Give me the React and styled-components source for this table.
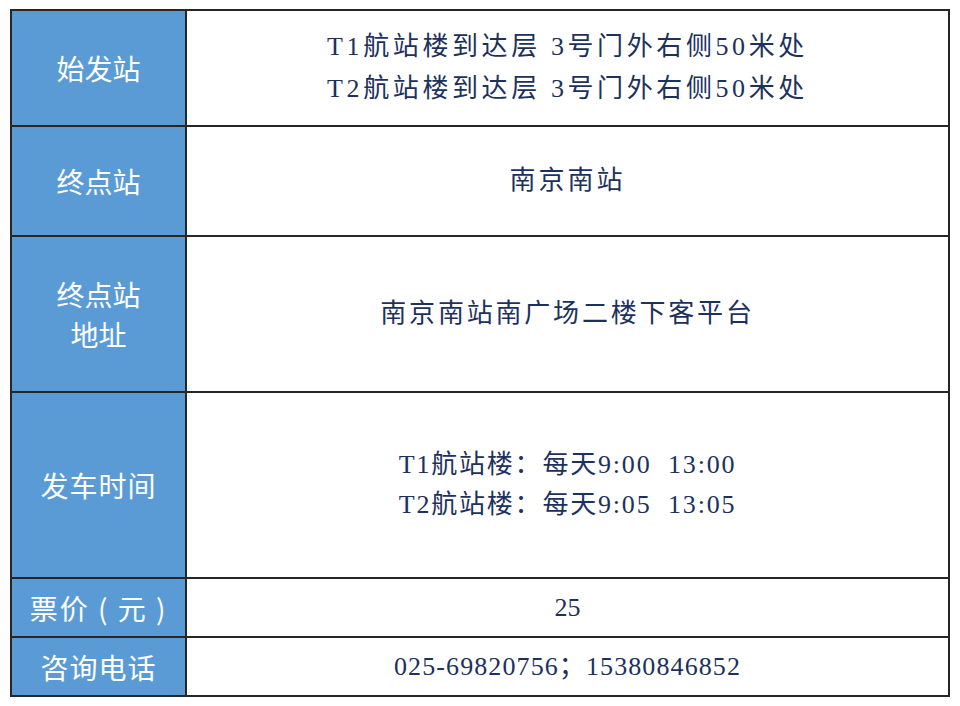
import React from "react";
import styled, { createGlobalStyle } from "styled-components";

const GlobalStyle = createGlobalStyle`
  html, body {
    margin: 0;
    padding: 0;
    background: #ffffff;
  }
`;

const Page = styled.div`
  padding: 9px 10px;
`;

const Grid = styled.div`
  display: grid;
  grid-template-columns: 173px 1fr;
  grid-template-rows: 114px 108px 154px 184px 57px 57px;
  gap: 2px;
  padding: 2px;
  width: 940px;
  box-sizing: border-box;
  background: #262626;
`;

const Label = styled.div`
  background: #5b9bd5;
  color: #ffffff;
  font-family: "Noto Sans CJK SC", "Noto Sans", sans-serif;
  font-size: 28px;
  letter-spacing: ${(p) => p.$spacing || 0}px;
  line-height: 40px;
  white-space: pre;
  display: flex;
  flex-direction: column;
  align-items: center;
  justify-content: center;
  text-align: center;
`;

const Value = styled.div`
  background: #ffffff;
  color: #1c315c;
  font-family: "Liberation Serif", "Noto Sans CJK SC", serif;
  font-size: 26px;
  line-height: ${(p) => p.$lh || 40}px;
  letter-spacing: ${(p) => p.$spacing || 0}px;
  white-space: pre;
  display: flex;
  flex-direction: column;
  align-items: center;
  justify-content: center;
  text-align: center;
`;

const rows = [
  {
    label: ["始发站"],
    value: ["T1航站楼到达层 3号门外右侧50米处", "T2航站楼到达层 3号门外右侧50米处"],
    spacing: 3.6,
    lh: 42,
  },
  { label: ["终点站"], value: ["南京南站"], spacing: 3 },
  { label: ["终点站", "地址"], value: ["南京南站南广场二楼下客平台"], spacing: 2.8 },
  {
    label: ["发车时间"],
    labelSpacing: 1,
    value: ["T1航站楼：每天9:00  13:00", "T2航站楼：每天9:05  13:05"],
    spacing: 1.8,
    lh: 40,
  },
  { label: ["票价 ( 元 )"], labelSpacing: 2, value: ["25"], spacing: 0 },
  { label: ["咨询电话"], labelSpacing: 1, value: ["025-69820756；15380846852"], spacing: 1.1 },
];

const App = () => {
  return (
    <Page>
      <GlobalStyle />
      <Grid>
        {rows.map((row, i) => (
          <React.Fragment key={i}>
            <Label $spacing={row.labelSpacing}>
              {row.label.map((l) => (
                <span key={l}>{l}</span>
              ))}
            </Label>
            <Value $spacing={row.spacing} $lh={row.lh}>
              {row.value.map((v) => (
                <span key={v}>{v}</span>
              ))}
            </Value>
          </React.Fragment>
        ))}
      </Grid>
    </Page>
  );
};

export default App;
